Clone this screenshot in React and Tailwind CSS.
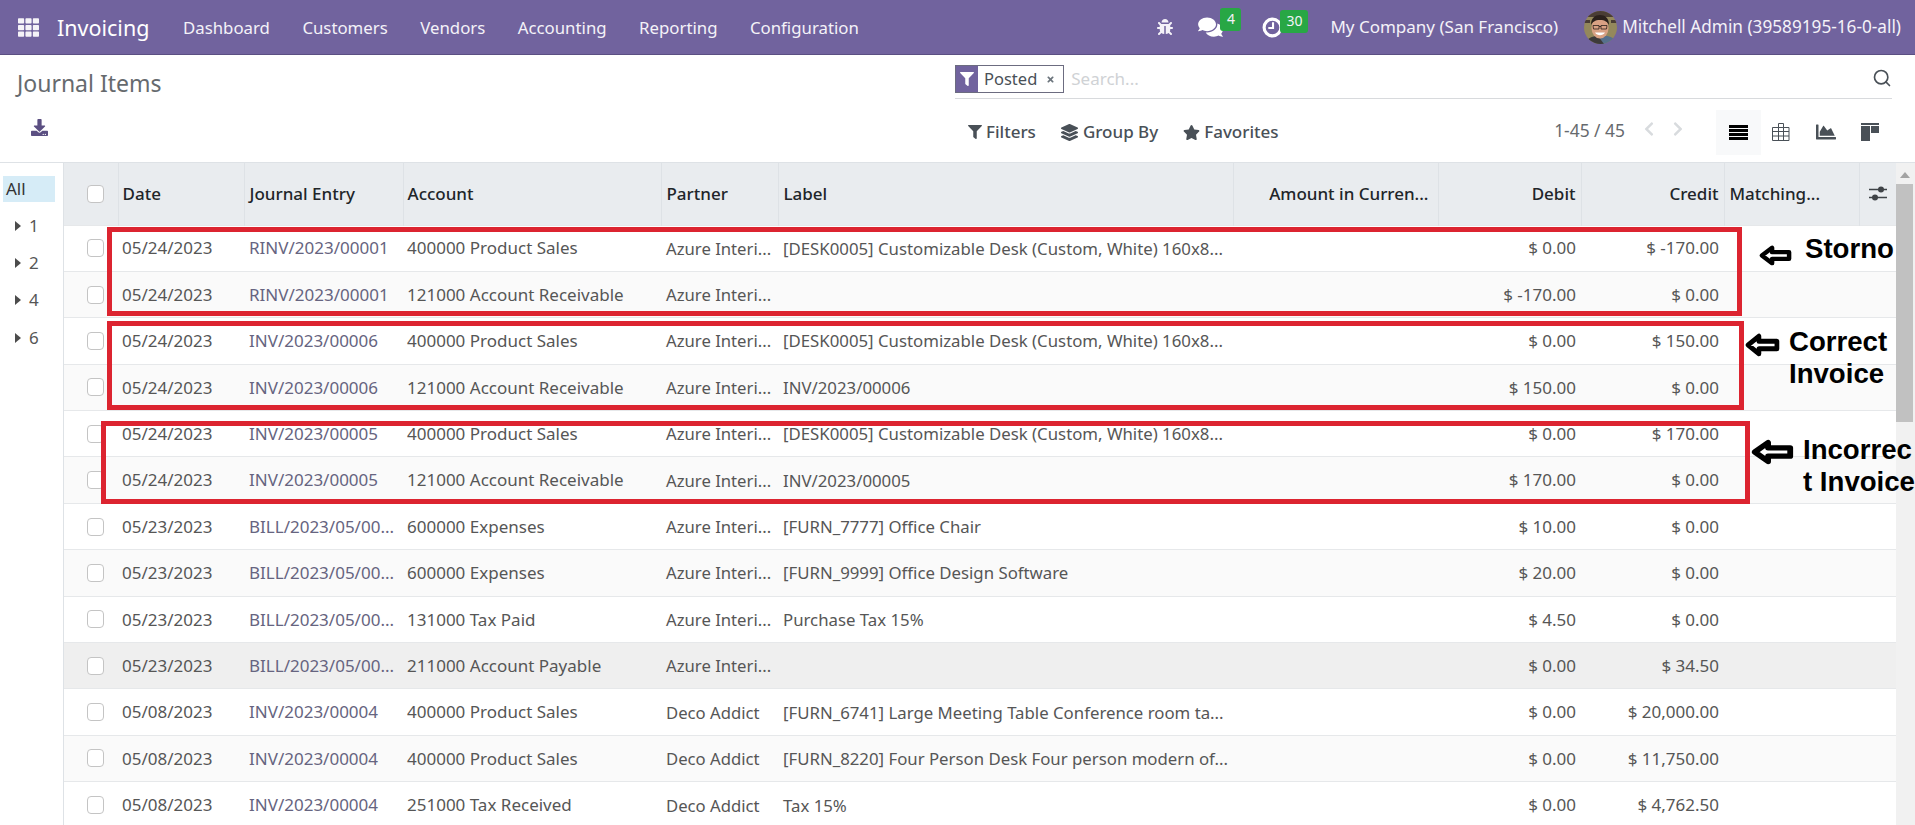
import React from 'react';
import { FaTh, FaBug, FaComments, FaFilter, FaLayerGroup, FaStar, FaChartArea, FaDownload, FaChevronLeft, FaChevronRight, FaTimes } from 'react-icons/fa';
import { Search } from 'lucide-react';

const menus = ['Dashboard', 'Customers', 'Vendors', 'Accounting', 'Reporting', 'Configuration'];

const rows = [
  ['05/24/2023', 'RINV/2023/00001', '400000 Product Sales', 'Azure Interi...', '[DESK0005] Customizable Desk (Custom, White) 160x8...', '$ 0.00', '$ -170.00'],
  ['05/24/2023', 'RINV/2023/00001', '121000 Account Receivable', 'Azure Interi...', '', '$ -170.00', '$ 0.00'],
  ['05/24/2023', 'INV/2023/00006', '400000 Product Sales', 'Azure Interi...', '[DESK0005] Customizable Desk (Custom, White) 160x8...', '$ 0.00', '$ 150.00'],
  ['05/24/2023', 'INV/2023/00006', '121000 Account Receivable', 'Azure Interi...', 'INV/2023/00006', '$ 150.00', '$ 0.00'],
  ['05/24/2023', 'INV/2023/00005', '400000 Product Sales', 'Azure Interi...', '[DESK0005] Customizable Desk (Custom, White) 160x8...', '$ 0.00', '$ 170.00'],
  ['05/24/2023', 'INV/2023/00005', '121000 Account Receivable', 'Azure Interi...', 'INV/2023/00005', '$ 170.00', '$ 0.00'],
  ['05/23/2023', 'BILL/2023/05/00...', '600000 Expenses', 'Azure Interi...', '[FURN_7777] Office Chair', '$ 10.00', '$ 0.00'],
  ['05/23/2023', 'BILL/2023/05/00...', '600000 Expenses', 'Azure Interi...', '[FURN_9999] Office Design Software', '$ 20.00', '$ 0.00'],
  ['05/23/2023', 'BILL/2023/05/00...', '131000 Tax Paid', 'Azure Interi...', 'Purchase Tax 15%', '$ 4.50', '$ 0.00'],
  ['05/23/2023', 'BILL/2023/05/00...', '211000 Account Payable', 'Azure Interi...', '', '$ 0.00', '$ 34.50'],
  ['05/08/2023', 'INV/2023/00004', '400000 Product Sales', 'Deco Addict', '[FURN_6741] Large Meeting Table Conference room ta...', '$ 0.00', '$ 20,000.00'],
  ['05/08/2023', 'INV/2023/00004', '400000 Product Sales', 'Deco Addict', '[FURN_8220] Four Person Desk Four person modern of...', '$ 0.00', '$ 11,750.00'],
  ['05/08/2023', 'INV/2023/00004', '251000 Tax Received', 'Deco Addict', 'Tax 15%', '$ 0.00', '$ 4,762.50'],
];

const Checkbox = () => (
  <span className="block w-[17px] h-[18px] ml-[23px] rounded-[4px] border border-[#c4c4c4] bg-white" />
);

const Arrow = ({ className }) => (
  <svg viewBox="0 0 34 22" preserveAspectRatio="none" className={className}>
    <path d="M3 11 L13.500 3 V7.500 H31 V14.500 H13.500 V19 Z" fill="#fff" stroke="#000" strokeWidth="4.600" strokeLinejoin="round" />
  </svg>
);

const Avatar = () => (
  <svg viewBox="0 0 33 33" className="w-[33px] h-[33px] rounded-full">
    <rect width="33" height="33" fill="#94885c" />
    <path d="M0 0h33v6H0zM0 9h6v3H0zM27 9h6v3h-6z" fill="#4a3d34" />
    <path d="M14 33c1-6 4-8 8-8s9 2 11 8z" fill="#56708c" />
    <path d="M2 33c1-6 6-8 12-8l6 8z" fill="#3d3a3a" />
    <ellipse cx="16" cy="17" rx="8.500" ry="10.500" fill="#d9a184" />
    <path d="M7 14c0-7 4-10 9-10s9 3 9 10c-1.500-3-4-5-9-5s-7.500 2-9 5z" fill="#2b211c" />
    <path d="M9 14.500h6v3.500H9.500zM17 14.500h6l-.5 3.500H17zM15 15.500h2" fill="none" stroke="#2b211c" strokeWidth=".8" />
    <path d="M11 21.500c2 3.500 8 3.500 10 0z" fill="#fff" />
  </svg>
);

const KanbanIcon = () => (
  <svg viewBox="0 0 18 18" className="w-[18px] h-[18px]" fill="#495057">
    <rect x="0" y="0" width="18" height="2" />
    <rect x="0" y="3" width="9" height="15" />
    <rect x="10" y="3" width="8" height="7" />
  </svg>
);

const TableIcon = () => (
  <svg viewBox="0 0 18 18" className="w-[18px] h-[18px]" fill="none" stroke="#495057" strokeWidth="1">
    <path d="M6.500 .5h5v4h5.500v13H.5v-13h6zM.5 8.500h16.500M.5 13h16.500M6.500 4.500v13M11.500 4.500v13M6.500 4.500h5" />
  </svg>
);

const ListIcon = () => (
  <svg viewBox="0 0 19 15" className="w-[19px] h-[15px]" fill="#000">
    <rect y="0" width="19" height="3" />
    <rect y="4" width="19" height="3" />
    <rect y="8" width="19" height="3" />
    <rect y="12" width="19" height="3" />
  </svg>
);

const ClockIcon = () => (
  <svg viewBox="0 0 20 20" className="w-[21px] h-[21px]" fill="none" stroke="#fff">
    <circle cx="10" cy="10" r="8" strokeWidth="3" />
    <path d="M10.500 5v5.500H6" strokeWidth="2" />
  </svg>
);

const SlidersIcon = () => (
  <svg viewBox="0 0 18 15" className="mx-auto w-[18px] h-[15px]" fill="#3f4347" stroke="#3f4347">
    <path d="M0 3.500h18M0 11.500h18" strokeWidth="1.300" />
    <circle cx="12" cy="3.500" r="3" stroke="none" />
    <circle cx="6" cy="11.500" r="3" stroke="none" />
  </svg>
);

const App = () => (
  <div className="h-screen overflow-hidden bg-white font-['Noto_Sans',sans-serif] text-[17px] text-[#565656] relative">
    {/* top bar */}
    <header className="h-[55px] bg-[#71639e] border-b border-[#5b4f82] flex items-center text-white">
      <FaTh className="ml-[18px] w-[21px] h-[21px] text-[#f5f3f8]" />
      <span className="ml-[18px] text-[21.500px] w-[126px] pt-[2px]">Invoicing</span>
      <nav className="flex gap-[32.500px] text-[16.800px] text-[#f4f2f8] pt-[2px]">
        {menus.map((m) => <span key={m}>{m}</span>)}
      </nav>
      <div className="ml-auto flex items-center pr-[14px] text-[#f4f2f8]">
        <FaBug className="w-[16px] h-[16px]" />
        <div className="relative ml-[25px] w-[42px]">
          <FaComments className="w-[25px] h-[22px] text-white" />
          <span className="absolute left-[22px] top-[-8px] w-[21px] h-[23px] rounded-[3px] bg-[#28a745] text-[14px] text-center leading-[21px]">4</span>
        </div>
        <div className="relative ml-[22px] w-[46px]">
          <ClockIcon />
          <span className="absolute left-[18px] top-[-7px] w-[28px] h-[23px] rounded-[3px] bg-[#28a745] text-[14px] text-center leading-[21px]">30</span>
        </div>
        <span className="ml-[22px]">My Company (San Francisco)</span>
        <span className="ml-[26px]"><Avatar /></span>
        <span className="ml-[5px] text-[17.200px]">Mitchell Admin (39589195-16-0-all)</span>
      </div>
    </header>

    {/* control panel */}
    <div className="h-[108px] border-b border-[#dee2e6] flex">
      <div className="w-[955px] pl-[17px]">
        <h1 className="mt-[12px] text-[23px] leading-[32px] text-[#666a6e]">Journal Items</h1>
        <FaDownload className="mt-[20px] ml-[14px] w-[17px] h-[17px] text-[#5b4f82]" />
      </div>
      <div className="flex-1 pr-[23px]">
        <div className="mt-[10px] flex border-b border-[#d8dadd] pb-[5px]">
          <div className="flex items-center h-[28px] border border-[#6c6c80]">
            <span className="w-[22px] h-full bg-[#71639e] flex items-center justify-center">
              <FaFilter className="w-[14px] h-[14px] text-white" />
            </span>
            <span className="ml-[6px] text-[16.500px] text-[#495057]">Posted</span>
            <FaTimes className="ml-[9px] mr-[8px] w-[9px] h-[9px] text-[#6c757d]" />
          </div>
          <span className="ml-[7px] leading-[28px] text-[#cfd2d5]">Search...</span>
          <Search className="ml-auto mt-[3px] w-[20px] h-[20px] text-[#495057]" strokeWidth={2} />
        </div>
        <div className="flex items-center h-[46px] mt-[10px]">
          <div className="flex items-center font-medium text-[#495057]">
            <FaFilter className="ml-[13px] w-[14px] h-[14px]" />
            <span className="ml-[4px]">Filters</span>
            <FaLayerGroup className="ml-[25px] w-[17px] h-[17px]" />
            <span className="ml-[5px]">Group By</span>
            <FaStar className="ml-[25px] w-[17px] h-[17px]" />
            <span className="ml-[4px]">Favorites</span>
          </div>
          <div className="ml-auto flex items-center">
            <span className="mr-[17px] mb-[4px] text-[17.400px] text-[#666a6e]">1-45 / 45</span>
            <FaChevronLeft className="mb-[6px] w-[14px] h-[16px] text-[#d8dbde]" />
            <FaChevronRight className="mb-[6px] ml-[15px] w-[14px] h-[16px] text-[#d8dbde]" />
            <div className="ml-[31px] w-[45px] h-[45px] bg-[#f8f9fa] flex items-center justify-center">
              <ListIcon />
            </div>
            <div className="w-[40px] flex justify-center"><TableIcon /></div>
            <div className="w-[50px] flex justify-center"><FaChartArea className="w-[20px] h-[20px] text-[#495057]" /></div>
            <div className="w-[38px] mr-[3px] flex justify-center"><KanbanIcon /></div>
          </div>
        </div>
      </div>
    </div>

    <div className="flex">
      {/* group panel */}
      <aside className="w-[64px] shrink-0 border-r border-[#dee2e6] pt-[13px]">
        <div className="ml-[3px] mr-[8px] h-[26px] bg-[#d6ecf7] leading-[26px] pl-[3px] text-[#333]">All</div>
        <div className="mt-[5px]">
          {['1', '2', '4', '6'].map((n) => (
            <div key={n} className="h-[37.300px] flex items-center pl-[15px]">
              <span className="border-l-[6px] border-l-[#4c4c4c] border-y-[5.500px] border-y-transparent" />
              <span className="ml-[8px]">{n}</span>
            </div>
          ))}
        </div>
      </aside>

      {/* list */}
      <div className="flex-1 min-w-0 flex">
        <table className="table-fixed w-[1832px] border-collapse">
          <colgroup>
            <col className="w-[54px]" />
            <col className="w-[126px]" />
            <col className="w-[159px]" />
            <col className="w-[258px]" />
            <col className="w-[117px]" />
            <col className="w-[455px]" />
            <col className="w-[205px]" />
            <col className="w-[143px]" />
            <col className="w-[143px]" />
            <col className="w-[135px]" />
            <col className="w-[37px]" />
          </colgroup>
          <thead>
            <tr className="h-[62px] bg-[#e9ecef] text-[#212529] font-medium">
              <th className="font-medium"><Checkbox /></th>
              <th className="font-medium text-left pl-[4px] pr-[5px] border-l border-[#dee2e6]">Date</th>
              <th className="font-medium text-left px-[5px] border-l border-[#dee2e6]">Journal Entry</th>
              <th className="font-medium text-left pl-[4px] pr-[5px] border-l border-[#dee2e6]">Account</th>
              <th className="font-medium text-left px-[5px] border-l border-[#dee2e6]">Partner</th>
              <th className="font-medium text-left px-[5px] border-l border-[#dee2e6]">Label</th>
              <th className="font-medium text-right pl-[5px] pr-[9px] border-l border-[#dee2e6]">Amount in Curren...</th>
              <th className="font-medium text-right px-[5px] border-l border-[#dee2e6]">Debit</th>
              <th className="font-medium text-right px-[5px] border-l border-[#dee2e6]">Credit</th>
              <th className="font-medium text-left px-[5px] border-l border-[#dee2e6]">Matching...</th>
              <th className="font-medium border-l border-[#dee2e6]">
                <SlidersIcon />
              </th>
            </tr>
          </thead>
          <tbody>
            {rows.map((r, i) => (
              <tr key={i} className={`h-[46.400px] border-t border-[#e6e8ea] ${i === 9 ? 'bg-[#efefef]' : i % 2 ? 'bg-[#fafafa]' : 'bg-white'}`}>
                <td><Checkbox /></td>
                <td className="pl-[4px] pr-[5px] whitespace-nowrap">{r[0]}</td>
                <td className="px-[5px] whitespace-nowrap overflow-hidden text-[#666480]">{r[1]}</td>
                <td className="pl-[4px] pr-[5px] whitespace-nowrap">{r[2]}</td>
                <td className="px-[5px] whitespace-nowrap text-[16.700px]">{r[3]}</td>
                <td className="px-[5px] whitespace-nowrap overflow-hidden text-[16.800px]">{r[4]}</td>
                <td />
                <td className="px-[5px] text-right whitespace-nowrap">{r[5]}</td>
                <td className="px-[5px] text-right whitespace-nowrap">{r[6]}</td>
                <td />
                <td />
              </tr>
            ))}
          </tbody>
        </table>
        {/* scrollbar */}
        <div className="w-[19px] shrink-0 bg-[#f1f1f1] relative">
          <span className="absolute left-[4px] top-[9px] border-x-[5px] border-x-transparent border-b-[6px] border-b-[#a3a3a3]" />
          <span className="absolute left-[0px] right-[2px] top-[21px] h-[238px] bg-[#c1c1c1]" />
        </div>
      </div>
    </div>

    {/* red annotation boxes pasted over the screenshot */}
    <div className="absolute left-[107px] top-[227px] w-[1635px] h-[89px] border-[5px] border-[#dc2430]" />
    <div className="absolute left-[107px] top-[321px] w-[1637px] h-[89px] border-[5px] border-[#dc2430]" />
    <div className="absolute left-[101px] top-[421px] w-[1649px] h-[83px] border-[5px] border-[#dc2430]" />

    <Arrow className="absolute left-[1759px] top-[245px] w-[33px] h-[21px]" />
    <Arrow className="absolute left-[1745px] top-[333px] w-[35px] h-[24px]" />
    <Arrow className="absolute left-[1751px] top-[439px] w-[43px] h-[26px]" />

    <div className="absolute left-[1805px] top-[233px] font-['Liberation_Sans',sans-serif] font-bold text-black text-[27.600px] leading-[32px]">Storno</div>
    <div className="absolute left-[1789px] top-[326px] font-['Liberation_Sans',sans-serif] font-bold text-black text-[27.600px] leading-[32px]">Correct<br />Invoice</div>
    <div className="absolute left-[1803px] top-[434px] font-['Liberation_Sans',sans-serif] font-bold text-black text-[27.600px] leading-[32px] whitespace-nowrap">Incorrec<br />t Invoice</div>
  </div>
);

export default App;
